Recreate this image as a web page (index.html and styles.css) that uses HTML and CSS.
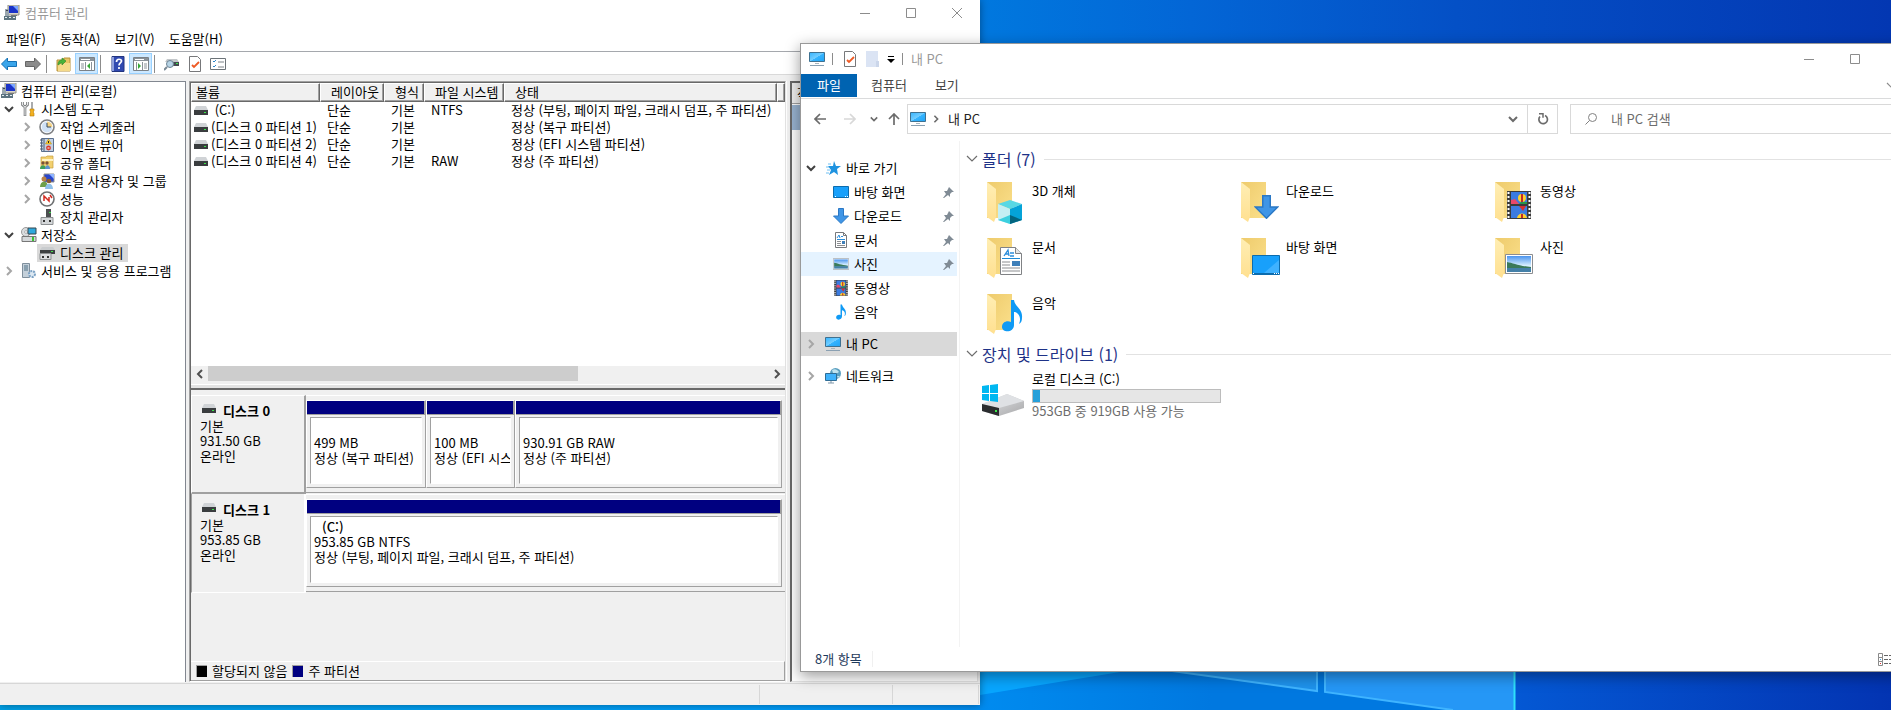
FILE: index.html
```html
<!DOCTYPE html>
<html lang="ko">

<head>
    <meta charset="UTF-8">
    <meta name="viewport" content="width=device-width, initial-scale=1.0">
    <title>컴퓨터 관리</title>
    <link rel="stylesheet" href="styles.css">
</head>

<body>
    <!-- Shared icons -->
    <svg class="sprite" aria-hidden="true">
        <defs>
            <linearGradient id="screen" x1="0" y1="0" x2="1" y2="1">
                <stop offset="0" stop-color="#35b4ff" />
                <stop offset=".5" stop-color="#74ceff" />
                <stop offset=".52" stop-color="#35b4ff" />
                <stop offset="1" stop-color="#22a4f5" />
            </linearGradient>
            <linearGradient id="folder-back" x1="0" y1="0" x2="1" y2="1">
                <stop offset="0" stop-color="#eecb6c" />
                <stop offset="1" stop-color="#fbe08c" />
            </linearGradient>
            <linearGradient id="folder-front" x1="0" y1="0" x2="0" y2="1">
                <stop offset="0" stop-color="#ffeeb4" />
                <stop offset="1" stop-color="#ffe090" />
            </linearGradient>
            <linearGradient id="sky" x1="0" y1="0" x2="0" y2="1">
                <stop offset="0" stop-color="#4a94ee" />
                <stop offset=".6" stop-color="#d8efff" />
            </linearGradient>
            <linearGradient id="metal" x1="0" y1="0" x2="1" y2="1">
                <stop offset="0" stop-color="#e6e8ea" />
                <stop offset="1" stop-color="#a8a8aa" />
            </linearGradient>
        </defs>
        <symbol id="i-mgmt" viewBox="0 0 16 16">
            <path d="M4 0h11v10H4z" fill="#d9d6c8" stroke="#8f8f88" />
            <path d="M5 1h9v7H5z" fill="#1b33c8" />
            <path d="M9 1h5v5z" fill="#7ba6ff" />
            <path d="M1 4h4v7H1z" fill="#9aa6ae" />
            <path d="M2 5h2v1H2z" fill="#445" />
            <path d="M0 11h12v4H0z" fill="#5d7480" />
            <path d="M1 12h2v1H1zm4 0h2v1H5zm4 0h2v1H9z" fill="#e8eef0" />
            <path d="M7 10h6v1H7z" fill="#777" />
        </symbol>
        <symbol id="i-tools" viewBox="0 0 16 16">
            <path d="M1.500 1v3l2.500 2 2.500-2V1M4 6v9" fill="none" stroke="#77797b" stroke-width="2.600" />
            <path d="M1.500 1v3l2.500 2 2.500-2V1M4 6v8.500" fill="none" stroke="#e9ebec" />
            <path d="M11 1v7" stroke="#8d8f92" stroke-width="1.500" />
            <path d="M9 8h4v2l-1 1 1 1v3H9v-3l1-1-1-1z" fill="#f2b01f" stroke="#b77d0c" stroke-width=".6" />
        </symbol>
        <symbol id="i-clock" viewBox="0 0 16 16">
            <circle cx="8" cy="8" r="7" fill="#fff" stroke="#7f8184" stroke-width="1.600" />
            <circle cx="8" cy="8" r="5.400" fill="#cfe1f5" />
            <path d="M8 2.600V8h5.400A5.400 5.400 0 0 0 8 2.600z" fill="#f7d484" />
            <path d="M8 4v4h4" fill="none" stroke="#34495e" />
        </symbol>
        <symbol id="i-event" viewBox="0 0 16 16">
            <path d="M2.500 1.500h12v13h-12z" fill="#c3d2e6" stroke="#5a6f8d" />
            <path d="M5 2v12M1 3h3M1 6h3M1 9h3M1 12h3" stroke="#4d5c73" />
            <path d="m9.500 2 3 5h-6z" fill="#ffcd2e" stroke="#a98008" stroke-width=".5" />
            <path d="M9.500 4v2" stroke="#222" />
            <circle cx="9.500" cy="11" r="2.400" fill="#d8382c" />
            <path d="M8.500 11h2" stroke="#fff" />
        </symbol>
        <symbol id="i-shared" viewBox="0 0 16 16">
            <path d="M2 2h5l1-1h6v12H2z" fill="#f2d06f" stroke="#c79f3d" stroke-width=".7" />
            <path d="M3 4h11v2H3z" fill="#fff3c4" />
            <circle cx="4" cy="8" r="1.700" fill="#7a5238" />
            <circle cx="8" cy="8" r="1.700" fill="#7a5238" />
            <path d="M1 14c0-5 6-5 6 0z" fill="#3d9e5b" />
            <path d="M6 14c0-5 5-5 5 0z" fill="#5c93cf" />
        </symbol>
        <symbol id="i-users" viewBox="0 0 16 16">
            <path d="M5 1h10v8H5z" fill="#2745cc" stroke="#8b8d90" />
            <path d="M10 1h5v5z" fill="#8fb4ff" />
            <circle cx="5" cy="6" r="2.500" fill="#b98145" />
            <circle cx="10" cy="8" r="2.300" fill="#8a5a30" />
            <path d="M1 14c0-7 8-7 8 0z" fill="#6fa04a" />
            <path d="M6 16c0-7 8-7 8 0z" fill="#8fc0ea" />
        </symbol>
        <symbol id="i-perf" viewBox="0 0 16 16">
            <circle cx="8" cy="8" r="7" fill="#fff" stroke="#6f7173" stroke-width="1.600" />
            <path d="M5 10V5l5 5V6M11 4l2 3" fill="none" stroke="#d22a20" stroke-width="1.500" />
        </symbol>
        <symbol id="i-device" viewBox="0 0 16 16">
            <path d="M7 0h5v8H7z" fill="#4b4e50" />
            <path d="M10 3h2v1h-2z" fill="#3be04c" />
            <path d="M2 8.500h12v7H2z" fill="#d4d7d9" stroke="#8d9092" />
            <path d="M4 11h2v2H4zm6 0h2v2h-2z" fill="#333" />
        </symbol>
        <symbol id="i-storage" viewBox="0 0 16 16">
            <circle cx="5" cy="5" r="4.500" fill="#dadddf" stroke="#999" />
            <circle cx="5" cy="5" r="1.400" fill="#fff" stroke="#888" stroke-width=".6" />
            <path d="M7 1h8v6H7z" fill="#2fa8dc" stroke="#37474f" />
            <path d="M1 9.500h14v5H1z" fill="#d5d8da" stroke="#777" />
            <path d="M11 10h2v4h-2z" fill="#3bc433" />
        </symbol>
        <symbol id="i-diskmgmt" viewBox="0 0 16 16">
            <path d="M3 2h11l2 3H1z" fill="#c9ccce" />
            <path d="M1 5h15v4H1z" fill="#3d4042" />
            <path d="M12 6h2v1h-2z" fill="#46e34a" />
            <path d="M1 8.500h11v6H1z" fill="#dcdee0" stroke="#8d9092" />
            <path d="M3 11h2v2H3zm5 0h2v2H8z" fill="#333" />
        </symbol>
        <symbol id="i-services" viewBox="0 0 16 16">
            <path d="M1.500.5h7v14h-7z" fill="#c4d0da" stroke="#7f8f9c" />
            <path d="M3 3h4M3 5h4M3 7h4" stroke="#4e7185" />
            <circle cx="11" cy="11" r="3" fill="#dce8f2" stroke="#7ba1c4" stroke-width="2" stroke-dasharray="2 1" />
        </symbol>
        <symbol id="i-drive" viewBox="0 0 14 9">
            <path d="M2 0h10l2 4H0z" fill="#d0d3d6" />
            <path d="M0 4h14v5H0z" fill="#3a3d3f" />
            <path d="M10 6h2v1h-2z" fill="#3be84a" />
        </symbol>
        <symbol id="i-pc" viewBox="0 0 16 16">
            <path d="M.5 1.500h15v9H.5z" fill="url(#screen)" stroke="#3f7190" />
            <path d="M6 12h4v1H6z" fill="#a9b4bc" />
            <path d="M1 14h14v1H1z" fill="#8aa0b2" />
        </symbol>
        <symbol id="i-check" viewBox="0 0 12 16">
            <path d="M.5.5h8l3 3v12H.5z" fill="#fff" stroke="#77787a" />
            <path d="m3 9 2 2 5-5" fill="none" stroke="#ee5a24" stroke-width="1.800" />
        </symbol>
        <symbol id="i-desktop" viewBox="0 0 16 12">
            <path d="M.5.5h15v11H.5z" fill="#18a0fb" stroke="#0b6cae" />
            <path d="M2 10.500h1m9 0h1m1 0h1" stroke="#fff" />
        </symbol>
        <symbol id="i-desktop-large" viewBox="0 0 28 20">
            <path d="M.5.5h27v19H.5z" fill="#18a0fb" stroke="#0b6cae" />
            <path d="M27 5v13H12z" fill="#3fb2ff" />
            <path d="M1 18.500h26" stroke="#0b6cae" />
            <path d="M1 18.500h1m20 0h1m1 0h1m1 0h1" stroke="#fff" />
        </symbol>
        <symbol id="i-down" viewBox="0 0 16 16">
            <path d="M5.500.5h5V8h5L8 15.500.5 8h5z" fill="#3f95e6" stroke="#2b78c5" />
        </symbol>
        <symbol id="i-doc" viewBox="0 0 22 28">
            <path d="M.5.5h15l6 6v21H.5z" fill="#fff" stroke="#808285" />
            <path d="M15.500.5v6h6" fill="#e4e5e6" stroke="#808285" />
            <path d="m4 9 4-6 1 6M5 7h4M10 6h4M10 9h4" fill="none" stroke="#2b8ddb" stroke-width="1.300" />
            <path d="M2 11.500h18" stroke="#1c8ad6" />
            <path d="M2 15h8M2 18h8M2 21h18M2 24h18" stroke="#8b8d90" />
            <path d="M12 14h8v5h-8z" fill="#3e7fb9" />
        </symbol>
        <symbol id="i-doc-small" viewBox="0 0 16 16">
            <path d="M2.500.5h8l3 3v12h-11z" fill="#fff" stroke="#77797c" />
            <path d="M10.500.5v3h3" fill="none" stroke="#77797c" />
            <path d="m4 6 2-3 1 3M8 4.500h2M4 7.500h8" fill="none" stroke="#2b8ddb" />
            <path d="M4 9.500h4M4 11.500h4M4 13.500h8" stroke="#8b8d90" />
            <path d="M9 9h3v3H9z" fill="#3e7fb9" />
        </symbol>
        <symbol id="i-photo" viewBox="0 0 28 20">
            <path d="M.5.5h27v19H.5z" fill="#fff" stroke="#8b8d90" />
            <path d="M2 2h24v16H2z" fill="url(#sky)" />
            <path d="M2 8c6 1 12 4 24 5v2H2z" fill="#3b7a5a" />
            <path d="M2 14h24v4H2z" fill="#4480a8" />
        </symbol>
        <symbol id="i-video" viewBox="0 0 24 28">
            <path d="M0 0h24v28H0z" fill="#3b3b3b" />
            <path d="M1.500 1v27M22.500 1v27" stroke="#fff" stroke-width="2" stroke-dasharray="2 2" />
            <path d="M4 1h16v12H4zM4 15h16v12H4z" fill="#3b7be0" />
            <path d="M4 9l4-1 4 5H4z" fill="#e8486a" />
            <path d="M12 13h8v-2h-6z" fill="#26964a" />
            <circle cx="15" cy="7" r="4" fill="#ffd02a" />
            <path d="M14 3h2v8h-2z" fill="#c22a2a" />
            <path d="M12 15h7l-3 5z" fill="#d63030" />
            <path d="M10 27c1-6 9-6 10 0z" fill="#ffd02a" />
            <path d="M14 23h2v4h-2z" fill="#c22a2a" />
        </symbol>
        <symbol id="i-music" viewBox="0 0 22 33">
            <path d="M10 1h3c1 7 9 9 8 18 0 3-1 5-3 6 3-7-1-12-5-12v13c0 8-12 8-12 2 0-5 5-7 9-5z" fill="#0f9af5" />
        </symbol>
        <symbol id="i-cube" viewBox="0 0 26 24">
            <path d="m13 0 12 4-12 5L1 4z" fill="#59d8e4" />
            <path d="m1 4 12 5v15L1 20z" fill="#c4eff3" />
            <path d="m25 4-12 5v15l12-4z" fill="#05a3d8" />
            <path d="m1 20 12-5v9z" fill="#3cd0df" />
            <path d="m25 20-12-5v9z" fill="#04657f" />
        </symbol>
        <symbol id="i-star" viewBox="0 0 16 16">
            <path d="m9 1 2 5 5 0-4 3 1 6-4-3-5 3 2-5-3-4h5z" fill="#1f93e0" />
            <path d="M3 4h3M1 7h3M2 10h3M1 13h3" stroke="#6ec0f2" />
        </symbol>
        <symbol id="i-network" viewBox="0 0 16 16">
            <circle cx="10.500" cy="5.500" r="5.500" fill="#5a9fc0" />
            <path d="M7 2c3-2 6 0 7 2l-3 2-3-1zM12 8h3l-2 2z" fill="#bfe3ee" />
            <path d="M.5 5.500h11v7H.5z" fill="#3fb2fb" stroke="#2f6d96" />
            <path d="M3 15h6M6 13v2" stroke="#7e97aa" />
        </symbol>
        <symbol id="i-pin" viewBox="0 0 11 11">
            <path d="M6 0l5 5-2 0-2 2 0 3-2-2-4 3-1 0 3-4-2-3 3 0 1-2z" fill="#808b95" />
        </symbol>
        <symbol id="i-folder" viewBox="0 0 48 48">
            <path d="M9 5h25v36H9z" fill="url(#folder-back)" />
            <path d="m9 5 9 7v28l-2 5-7-5z" fill="url(#folder-front)" />
        </symbol>
        <symbol id="i-chev" viewBox="0 0 10 10">
            <path d="m3 1 4 4-4 4" fill="none" stroke="currentColor" stroke-width="2" />
        </symbol>
        <symbol id="i-chev-down" viewBox="0 0 10 10">
            <path d="m1 3 4 4 4-4" fill="none" stroke="currentColor" stroke-width="2" />
        </symbol>
        <symbol id="i-chev-thin" viewBox="0 0 12 12">
            <path d="m1 3 5 5 5-5" fill="none" stroke="currentColor" stroke-width="1.200" />
        </symbol>
        <symbol id="i-min" viewBox="0 0 10 10">
            <path d="M0 5.500h10" stroke="currentColor" />
        </symbol>
        <symbol id="i-max" viewBox="0 0 10 10">
            <path d="M.5.5h9v9h-9z" fill="none" stroke="currentColor" />
        </symbol>
        <symbol id="i-close" viewBox="0 0 10 10">
            <path d="m0 0 10 10M10 0 0 10" stroke="currentColor" />
        </symbol>
    </svg>

    <svg class="wallpaper" viewBox="0 0 1891 710" preserveAspectRatio="none" aria-hidden="true">
        <defs>
            <linearGradient id="wall-top" x1="0" x2="1">
                <stop offset=".5" stop-color="#007be0" />
                <stop offset=".63" stop-color="#0366d6" />
                <stop offset=".77" stop-color="#0450c6" />
                <stop offset="1" stop-color="#0337b2" />
            </linearGradient>
            <linearGradient id="wall-low" x1="0" x2="1">
                <stop offset="0" stop-color="#00a0e6" />
                <stop offset=".5" stop-color="#009df8" />
                <stop offset=".6" stop-color="#0091f4" />
                <stop offset=".8" stop-color="#0078e0" />
            </linearGradient>
            <linearGradient id="wall-right" x1="0" x2="1">
                <stop offset="0" stop-color="#0458d4" />
                <stop offset="1" stop-color="#0334b2" />
            </linearGradient>
        </defs>
        <path d="M0 0h1891v710H0z" fill="url(#wall-top)" />
        <path d="M0 500h1515v210H0z" fill="url(#wall-low)" />
        <path d="M1515 500h376v210h-376z" fill="url(#wall-right)" />
        <path d="M980 695l140-23H980z" fill="#08a6ff" />
        <path d="M1170 671h147v20z" fill="#1e92ec" />
        <path d="M1325 671h190v39h-62l-128-18z" fill="#2597f6" />
        <path d="M1172 671l145 20v-20M1325 671v21l128 18" fill="none" stroke="#3fb4ff" stroke-width="2" />
        <path d="M1514.500 500v210" stroke="#2fe0fb" stroke-width="2" />
    </svg>

    <!-- Computer Management -->
    <section class="window mgmt">
        <header class="mgmt-title">
            <svg class="i16"><use href="#i-mgmt" /></svg>
            <h1>컴퓨터 관리</h1>
            <div class="controls">
                <button type="button" aria-label="최소화"><svg class="i10"><use href="#i-min" /></svg></button>
                <button type="button" aria-label="최대화"><svg class="i10"><use href="#i-max" /></svg></button>
                <button type="button" aria-label="닫기"><svg class="i10"><use href="#i-close" /></svg></button>
            </div>
        </header>
        <nav class="menubar">
            <button type="button">파일(F)</button>
            <button type="button">동작(A)</button>
            <button type="button">보기(V)</button>
            <button type="button">도움말(H)</button>
        </nav>
        <div class="toolbar">
            <button type="button" aria-label="뒤로"><svg class="i16" viewBox="0 0 16 16"><path d="m.5 8 6-6v3.500h9v5h-9V14z" fill="#3aa5ea" stroke="#1571b5" /></svg></button>
            <button type="button" aria-label="앞으로"><svg class="i16" viewBox="0 0 16 16"><path d="m15.500 8-6-6v3.500h-9v5h9V14z" fill="#8c8c8c" stroke="#666" /></svg></button>
            <span class="sep"></span>
            <button type="button" aria-label="위로"><svg class="i16" viewBox="0 0 16 16"><path d="M1 4h6l1-2h6v13H1z" fill="#e8c565" stroke="#b8923a" /><path d="M2 7h12v8H2z" fill="#f5da8a" /><path d="M2 9c0-4 2-5 4-5V2l4 3-4 4V7C4 7 4 8 2 9z" fill="#48b33a" stroke="#2e8526" stroke-width=".6" /></svg></button>
            <button type="button" class="on" aria-label="콘솔 트리"><svg class="i16" viewBox="0 0 16 16"><path d="M.5 1.500h15v13H.5z" fill="#fff" stroke="#7b8187" /><path d="M1 2h14v3H1z" fill="#8a9299" /><path d="M2 3.500h9" stroke="#fff" /><path d="M6.500 6v8M12.500 6v8M2 8h3M2 10h3M2 12h3" stroke="#8a9299" /><path d="M11 7v6l-3-3z" fill="#37a837" /></svg></button>
            <span class="sep"></span>
            <button type="button" aria-label="도움말"><svg class="i16" viewBox="0 0 16 16"><path d="M2 .5h12v15H2z" fill="#3049b0" stroke="#22357f" /><path d="M2 1h2v14H2z" fill="#8fa0dd" /><path d="M6.500 6c0-4 5-3 5-1 0 2-2.500 2-2.500 4.500M9 11v2" fill="none" stroke="#fff" stroke-width="1.700" /></svg></button>
            <button type="button" class="on" aria-label="작업 창"><svg class="i16" viewBox="0 0 16 16"><path d="M.5 1.500h15v13H.5z" fill="#fff" stroke="#7b8187" /><path d="M1 2h14v3H1z" fill="#8a9299" /><path d="M2 3.500h9" stroke="#fff" /><path d="M3.500 6v8M9.500 6v8M11 8h3M11 10h3M11 12h3" stroke="#8a9299" /><path d="M5 7v6l3-3z" fill="#37a837" /></svg></button>
            <span class="sep"></span>
            <button type="button" aria-label="다시 검색"><svg class="i16" viewBox="0 0 16 16"><path d="M3 3h10l2 3H1z" fill="#c3c7ca" /><path d="M3 6h12v4H3z" fill="#444b50" /><path d="M12 7h2v1h-2z" fill="#3be84a" /><circle cx="6" cy="8" r="3.500" fill="#b7d4e6" stroke="#6d8495" /><path d="m3 11-3 3" stroke="#7a8a96" stroke-width="2" /></svg></button>
            <button type="button" aria-label="속성"><svg class="check"><use href="#i-check" /></svg></button>
            <button type="button" aria-label="목록"><svg class="i16" viewBox="0 0 16 16"><path d="M.5 2.500h15v11H.5z" fill="#fff" stroke="#6c7378" /><path d="m3 5 1 1 2-2M3 10l1 1 2-2" fill="none" stroke="#2e86c9" /><path d="M8 6h6M8 11h6" stroke="#7c8388" /></svg></button>
        </div>

        <div class="mgmt-body">
            <ul class="tree">
                <li><svg class="i16"><use href="#i-mgmt" /></svg><span>컴퓨터 관리(로컬)</span></li>
                <li class="l1 open"><svg class="i10"><use href="#i-chev-down" /></svg><svg class="i16"><use href="#i-tools" /></svg><span>시스템 도구</span></li>
                <li class="l2"><svg class="i10"><use href="#i-chev" /></svg><svg class="i16"><use href="#i-clock" /></svg><span>작업 스케줄러</span></li>
                <li class="l2"><svg class="i10"><use href="#i-chev" /></svg><svg class="i16"><use href="#i-event" /></svg><span>이벤트 뷰어</span></li>
                <li class="l2"><svg class="i10"><use href="#i-chev" /></svg><svg class="i16"><use href="#i-shared" /></svg><span>공유 폴더</span></li>
                <li class="l2"><svg class="i10"><use href="#i-chev" /></svg><svg class="i16"><use href="#i-users" /></svg><span>로컬 사용자 및 그룹</span></li>
                <li class="l2"><svg class="i10"><use href="#i-chev" /></svg><svg class="i16"><use href="#i-perf" /></svg><span>성능</span></li>
                <li class="l2 leaf"><svg class="i16"><use href="#i-device" /></svg><span>장치 관리자</span></li>
                <li class="l1 open"><svg class="i10"><use href="#i-chev-down" /></svg><svg class="i16"><use href="#i-storage" /></svg><span>저장소</span></li>
                <li class="l2 leaf selected"><svg class="i16"><use href="#i-diskmgmt" /></svg><span>디스크 관리</span></li>
                <li class="l1"><svg class="i10"><use href="#i-chev" /></svg><svg class="i16"><use href="#i-services" /></svg><span>서비스 및 응용 프로그램</span></li>
            </ul>

            <div class="disk-pane">
                <div class="volume-list">
                    <table>
                        <thead>
                            <tr>
                                <th class="c-volume">볼륨</th>
                                <th class="c-layout">레이아웃</th>
                                <th class="c-type">형식</th>
                                <th class="c-fs">파일 시스템</th>
                                <th class="c-status">상태</th>
                                <th></th>
                            </tr>
                        </thead>
                        <tbody>
                            <tr>
                                <td><svg class="drive"><use href="#i-drive" /></svg>&nbsp;(C:)</td>
                                <td>단순</td>
                                <td>기본</td>
                                <td>NTFS</td>
                                <td>정상 (부팅, 페이지 파일, 크래시 덤프, 주 파티션)</td>
                                <td></td>
                            </tr>
                            <tr>
                                <td><svg class="drive"><use href="#i-drive" /></svg>(디스크 0 파티션 1)</td>
                                <td>단순</td>
                                <td>기본</td>
                                <td></td>
                                <td>정상 (복구 파티션)</td>
                                <td></td>
                            </tr>
                            <tr>
                                <td><svg class="drive"><use href="#i-drive" /></svg>(디스크 0 파티션 2)</td>
                                <td>단순</td>
                                <td>기본</td>
                                <td></td>
                                <td>정상 (EFI 시스템 파티션)</td>
                                <td></td>
                            </tr>
                            <tr>
                                <td><svg class="drive"><use href="#i-drive" /></svg>(디스크 0 파티션 4)</td>
                                <td>단순</td>
                                <td>기본</td>
                                <td>RAW</td>
                                <td>정상 (주 파티션)</td>
                                <td></td>
                            </tr>
                        </tbody>
                    </table>
                </div>
                <div class="scrollbar">
                    <button type="button" aria-label="왼쪽으로"><svg class="i10 flip"><use href="#i-chev" /></svg></button>
                    <div class="track"><div class="thumb"></div></div>
                    <button type="button" aria-label="오른쪽으로"><svg class="i10"><use href="#i-chev" /></svg></button>
                </div>
                <div class="splitter"></div>

                <div class="disks">
                    <div class="disk">
                        <div class="disk-label">
                            <h2><svg class="drive"><use href="#i-drive" /></svg>디스크 0</h2>
                            <p>기본</p>
                            <p>931.50 GB</p>
                            <p>온라인</p>
                        </div>
                        <div class="parts">
                            <div class="part recovery">
                                <div class="bar"></div>
                                <div class="info"><p></p><p>499 MB</p><p>정상 (복구 파티션)</p></div>
                            </div>
                            <div class="part efi">
                                <div class="bar"></div>
                                <div class="info"><p></p><p>100 MB</p><p>정상 (EFI 시스</p></div>
                            </div>
                            <div class="part">
                                <div class="bar"></div>
                                <div class="info"><p></p><p>930.91 GB RAW</p><p>정상 (주 파티션)</p></div>
                            </div>
                        </div>
                    </div>
                    <div class="disk current">
                        <div class="disk-label">
                            <h2><svg class="drive"><use href="#i-drive" /></svg>디스크 1</h2>
                            <p>기본</p>
                            <p>953.85 GB</p>
                            <p>온라인</p>
                        </div>
                        <div class="parts">
                            <div class="part">
                                <div class="bar"></div>
                                <div class="info"><p class="name">(C:)</p><p>953.85 GB NTFS</p><p>정상 (부팅, 페이지 파일, 크래시 덤프, 주 파티션)</p></div>
                            </div>
                        </div>
                    </div>
                </div>
                <div class="legend">
                    <span class="swatch unallocated"></span><span>할당되지 않음</span>
                    <span class="swatch primary"></span><span>주 파티션</span>
                </div>
            </div>

            <aside class="actions">
                <h2>작업</h2>
                <div class="action-group">디스크 관리</div>
            </aside>
        </div>
        <footer class="mgmt-status"><span></span><span></span><span></span></footer>
    </section>

    <!-- File Explorer -->
    <section class="window explorer">
        <header class="exp-title">
            <svg class="i16"><use href="#i-pc" /></svg>
            <span class="sep"></span>
            <button type="button" aria-label="속성"><svg class="check"><use href="#i-check" /></svg></button>
            <button type="button" aria-label="새 폴더"><svg class="ghost" viewBox="0 0 13 16"><path d="M0 0h12v16H0z" fill="#dbe4f4" /><path d="M10 10h3v6h-3z" fill="#cbd6ea" /></svg></button>
            <button type="button" aria-label="사용자 지정"><svg class="caret" viewBox="0 0 8 8"><path d="M1 1.500h6" stroke="#000" /><path d="M0 4h8L4 8z" /></svg></button>
            <span class="sep"></span>
            <h1>내 PC</h1>
            <div class="controls">
                <button type="button" aria-label="최소화"><svg class="i10"><use href="#i-min" /></svg></button>
                <button type="button" aria-label="최대화"><svg class="i10"><use href="#i-max" /></svg></button>
                <button type="button" aria-label="닫기"><svg class="i10"><use href="#i-close" /></svg></button>
            </div>
        </header>
        <nav class="tabs">
            <button type="button" class="file">파일</button>
            <button type="button">컴퓨터</button>
            <button type="button">보기</button>
            <button type="button" class="expand" aria-label="리본 확장"><svg class="i12"><use href="#i-chev-thin" /></svg></button>
        </nav>
        <div class="navbar">
            <button type="button" class="back" aria-label="뒤로"><svg class="i12" viewBox="0 0 12 12"><path d="M12 6H1M6 1 1 6l5 5" fill="none" stroke="#6b6b6b" stroke-width="1.700" /></svg></button>
            <button type="button" class="forward" aria-label="앞으로"><svg class="i12" viewBox="0 0 12 12"><path d="M0 6h11M6 1l5 5-5 5" fill="none" stroke="#d8d8d8" stroke-width="1.700" /></svg></button>
            <button type="button" class="recent" aria-label="최근 위치"><svg class="i8"><use href="#i-chev-down" /></svg></button>
            <button type="button" class="up" aria-label="위로"><svg class="i12" viewBox="0 0 12 12"><path d="M6 12V1M1 6l5-5 5 5" fill="none" stroke="#6b6b6b" stroke-width="1.700" /></svg></button>
            <div class="address">
                <svg class="i16"><use href="#i-pc" /></svg>
                <svg class="i8"><use href="#i-chev" /></svg>
                <a href="#">내 PC</a>
                <button type="button" class="history" aria-label="이전 위치"><svg class="i10"><use href="#i-chev-down" /></svg></button>
                <button type="button" class="refresh" aria-label="새로 고침"><svg class="i12" viewBox="0 0 12 12"><path d="M8 2.500a4.300 4.300 0 1 1-5 1" fill="none" stroke="#6b6b6b" stroke-width="1.700" /><path d="M2 .8h4v4" fill="none" stroke="#6b6b6b" stroke-width="1.500" /></svg></button>
            </div>
            <label class="search">
                <svg class="i12" viewBox="0 0 12 12"><circle cx="7.500" cy="4.500" r="4" fill="none" stroke="#808080" /><path d="m4.500 7.500-4 4" stroke="#808080" /></svg>
                <input type="text" placeholder="내 PC 검색" aria-label="내 PC 검색">
            </label>
        </div>

        <div class="exp-body">
            <nav class="side">
                <ul>
                    <li class="open"><svg class="i10"><use href="#i-chev-down" /></svg><svg class="i16"><use href="#i-star" /></svg><a href="#">바로 가기</a></li>
                    <li class="sub"><svg class="i16"><use href="#i-desktop" /></svg><a href="#">바탕 화면</a><svg class="pin"><use href="#i-pin" /></svg></li>
                    <li class="sub"><svg class="i16"><use href="#i-down" /></svg><a href="#">다운로드</a><svg class="pin"><use href="#i-pin" /></svg></li>
                    <li class="sub"><svg class="i16"><use href="#i-doc-small" /></svg><a href="#">문서</a><svg class="pin"><use href="#i-pin" /></svg></li>
                    <li class="sub hover"><svg class="i16"><use href="#i-photo" /></svg><a href="#">사진</a><svg class="pin"><use href="#i-pin" /></svg></li>
                    <li class="sub"><svg class="i16"><use href="#i-video" /></svg><a href="#">동영상</a></li>
                    <li class="sub"><svg class="i16"><use href="#i-music" /></svg><a href="#">음악</a></li>
                </ul>
                <ul>
                    <li class="selected"><svg class="i10"><use href="#i-chev" /></svg><svg class="i16"><use href="#i-pc" /></svg><a href="#">내 PC</a></li>
                </ul>
                <ul>
                    <li><svg class="i10"><use href="#i-chev" /></svg><svg class="i16"><use href="#i-network" /></svg><a href="#">네트워크</a></li>
                </ul>
            </nav>

            <main class="content">
                <h2><svg class="i12"><use href="#i-chev-thin" /></svg>폴더 (7)</h2>
                <div class="grid">
                    <a class="tile" href="#"><svg viewBox="0 0 48 48"><use href="#i-folder" /><use href="#i-cube" x="19" y="23" width="26" height="24" /></svg>3D 개체</a>
                    <a class="tile" href="#"><svg viewBox="0 0 48 48"><use href="#i-folder" /><use href="#i-down" x="22" y="18" width="25" height="24" /></svg>다운로드</a>
                    <a class="tile" href="#"><svg viewBox="0 0 48 48"><use href="#i-folder" /><use href="#i-video" x="21" y="14" width="24" height="28" /></svg>동영상</a>
                    <a class="tile" href="#"><svg viewBox="0 0 48 48"><use href="#i-folder" /><use href="#i-doc" x="22" y="14" width="22" height="28" /></svg>문서</a>
                    <a class="tile" href="#"><svg viewBox="0 0 48 48"><use href="#i-folder" /><use href="#i-desktop-large" x="20" y="22" width="28" height="20" /></svg>바탕 화면</a>
                    <a class="tile" href="#"><svg viewBox="0 0 48 48"><use href="#i-folder" /><use href="#i-photo" x="19" y="21" width="28" height="20" /></svg>사진</a>
                    <a class="tile" href="#"><svg viewBox="0 0 48 48"><use href="#i-folder" /><use href="#i-music" x="23" y="10" width="22" height="33" /></svg>음악</a>
                </div>
                <h2><svg class="i12"><use href="#i-chev-thin" /></svg>장치 및 드라이브 (1)</h2>
                <div class="volume">
                    <svg viewBox="0 0 48 48">
                        <path d="m4 31 25-10 17 7v7L21 43 4 38z" fill="url(#metal)" />
                        <path d="m4 31 25-10 17 7-25 7z" fill="#dfe1e4" />
                        <path d="m4 31 17 4v8L4 38z" fill="#2b2d2f" />
                        <path d="M17 37h2v2h-2z" fill="#39e84a" />
                        <path d="m4 13 7-1v8H4zm8-1 8-1v9h-8zM4 21h7v7l-7-1zm8 0h8v8l-8-1z" fill="#00b7f1" />
                    </svg>
                    <div>
                        <a href="#">로컬 디스크 (C:)</a>
                        <progress value="34" max="953" aria-label="로컬 디스크 (C:)"></progress>
                        <p>953GB 중 919GB 사용 가능</p>
                    </div>
                </div>
            </main>
        </div>
        <footer class="exp-status">
            <span>8개 항목</span>
            <button type="button" aria-label="자세히"><svg class="details" viewBox="0 0 20 13"><path d="M.5.5h4v4h-4zM.5 4.500h4v4h-4zM.5 8.500h4v4h-4z" fill="#fff" stroke="#8a8a8a" /><path d="M2 6.500h1" stroke="#3a9be0" /><path d="M2 10.500h1" stroke="#d33" /><path d="M6 2.500h4m1 0h4M6 6.500h4m1 0h4M6 10.500h4m1 0h4" stroke="#666" /></svg></button>
        </footer>
    </section>
</body>

</html>
```

FILE: styles.css
```css
:root {
    --face: #f0f0f0;
    --shadow: #a0a0a0;
    --dark: #696969;
    --navy: #000080;
}

* {
    box-sizing: border-box;
}

body {
    margin: 0;
    height: 100vh;
    overflow: hidden;
    position: relative;
    font: 13px/16px "Noto Sans CJK KR", "Open Sans", sans-serif;
    color: #000;
}

h1,
h2,
p,
ul {
    margin: 0;
    padding: 0;
    font-size: 13px;
    font-weight: normal;
}

ul {
    list-style: none;
}

a {
    color: inherit;
    text-decoration: none;
}

button {
    display: flex;
    align-items: center;
    justify-content: center;
    margin: 0;
    padding: 0;
    border: 0;
    background: none;
    font: inherit;
    color: inherit;
}

svg {
    display: block;
    flex: none;
}

.sprite {
    position: absolute;
    width: 0;
    height: 0;
}

.wallpaper {
    position: absolute;
    inset: 0;
    width: 100%;
    height: 100%;
}

.i8 {
    width: 8px;
    height: 8px;
}

.i10 {
    width: 10px;
    height: 10px;
}

.i12 {
    width: 12px;
    height: 12px;
}

.i16 {
    width: 16px;
    height: 16px;
}

.check {
    width: 12px;
    height: 16px;
}

.drive {
    width: 14px;
    height: 9px;
}

.flip {
    transform: scaleX(-1);
}

/* Windows on the desktop */
.window {
    position: absolute;
    display: flex;
    flex-direction: column;
    background: #fff;
}

.mgmt {
    inset: 0 911px 5px 0;
    box-shadow: 0 0 8px rgba(0, 0, 0, 0.4);
}

.explorer {
    inset: 43px -34px 38px 800px;
    border: 1px solid #999;
    box-shadow: 0 4px 14px rgba(0, 0, 0, 0.4);
}

.controls {
    display: flex;
    align-self: stretch;
    margin-left: auto;
    color: #8c8c8c;
}

.controls button {
    width: 46px;
}

.sep {
    width: 1px;
    background: #8c8c8c;
}

/* Computer Management */
.mgmt-title {
    display: flex;
    align-items: center;
    gap: 5px;
    height: 27px;
    padding: 0 0 2px 4px;
    color: #999;
}

.menubar {
    display: flex;
    gap: 14px;
    height: 25px;
    padding: 0 6px 1px;
    border-bottom: 1px solid #a5a8ad;
}

.toolbar {
    display: flex;
    align-items: center;
    height: 23px;
    padding-top: 1px;
    border-bottom: 1px solid #d9d9d9;
}

.toolbar button {
    width: 23px;
    height: 21px;
}

.toolbar button:first-child {
    width: 18px;
    margin-right: 3px;
}

.toolbar .on {
    background: #cce8ff;
    border: 1px solid #99d1ff;
}

.toolbar .sep {
    height: 18px;
    margin: 0 5px 0 2px;
}

.mgmt-body {
    flex: 1;
    display: flex;
    gap: 3px;
    min-height: 0;
    padding: 6px 2px 1px 0;
    background: var(--face);
}

.tree {
    width: 186px;
    border: 1px solid #828790;
    border-width: 1px 1px 0 0;
    background: #fff;
}

.tree li {
    display: flex;
    align-items: center;
    gap: 4px;
    height: 18px;
    padding-left: 1px;
    white-space: nowrap;
}

.tree .l1 {
    padding-left: 4px;
}

.tree .l1 .i10 + .i16 {
    margin-left: 3px;
}

.tree .l2 {
    padding-left: 22px;
    gap: 5px;
}

.tree .l2 .i10 + .i16 {
    margin-left: 2px;
}

.tree .leaf {
    margin-left: 37px;
    padding-left: 2px;
}

.tree .selected {
    width: 91px;
    background: #d9d9d9;
}

.tree .i10 {
    color: #a6a6a6;
}

.tree .open .i10 {
    color: #404040;
}

.disk-pane {
    flex: 1;
    min-width: 0;
    display: flex;
    flex-direction: column;
    margin-right: 1px;
    border: 1px solid var(--shadow);
    border-right-color: #e3e3e3;
    border-bottom-color: #fff;
    box-shadow: inset 1px 1px 0 var(--dark), 1px 0 0 #fff;
    padding: 1px 0 0 1px;
}

.volume-list {
    height: 283px;
    overflow: hidden;
    background: #fff;
}

.volume-list table {
    width: 100%;
    table-layout: fixed;
    border-collapse: separate;
    border-spacing: 0;
}

.volume-list th {
    height: 19px;
    padding: 0 0 1px 10px;
    border: 1px solid #fff;
    border-right-color: var(--dark);
    border-bottom-color: var(--dark);
    box-shadow: inset -1px -1px 0 var(--shadow);
    background: var(--face);
    font-weight: normal;
    text-align: left;
    white-space: nowrap;
}

.volume-list .c-volume {
    width: 129px;
    padding-left: 4px;
}

.c-layout {
    width: 64px;
}

.c-type {
    width: 40px;
}

.c-fs {
    width: 80px;
}

.c-status {
    width: 273px;
}

.volume-list td {
    height: 17px;
    padding: 0 0 2px 7px;
    line-height: 15px;
    white-space: nowrap;
}

.volume-list td:first-child {
    padding-left: 3px;
}

.volume-list .drive {
    display: inline-block;
    margin-right: 3px;
}

.scrollbar {
    display: flex;
    height: 18px;
    padding-bottom: 2px;
    background: var(--face);
    color: #505050;
}

.scrollbar button {
    width: 17px;
}

.track {
    flex: 1;
}

.thumb {
    width: 66%;
    height: 15px;
    background: #cdcdcd;
}

.splitter {
    height: 6px;
    border-top: 1px solid #fff;
    border-bottom: 2px solid var(--dark);
    background: #e3e3e3;
}

.disks {
    flex: 1;
    padding-top: 5px;
    background: var(--face);
}

.disk {
    display: flex;
    height: 99px;
}

.disk-label {
    width: 115px;
    padding: 7px 0 0 8px;
    border: 1px solid #fff;
    border-right: 2px solid var(--shadow);
    border-bottom: 2px solid var(--shadow);
    line-height: 15px;
}

.current .disk-label {
    border-color: var(--shadow) #fff #fff var(--shadow);
    border-top-width: 0;
    border-bottom-width: 1px;
    padding-top: 8px;
}

.disk-label h2 {
    display: flex;
    align-items: center;
    gap: 7px;
    padding-left: 2px;
    font-weight: bold;
}

.disk-label h2 .drive {
    margin-bottom: 4px;
}

.parts {
    flex: 1;
    display: flex;
    min-width: 0;
    margin-bottom: 1px;
    padding: 4px 3px 4px 0;
    border-top: 1px solid #fff;
    border-bottom: 1px solid var(--shadow);
}

.part {
    flex: 1;
    min-width: 0;
    display: flex;
    flex-direction: column;
    border: 1px solid #fff;
    border-right-color: var(--shadow);
    border-bottom-color: var(--shadow);
}

.part.recovery {
    flex: none;
    width: 120px;
}

.part.efi {
    flex: none;
    width: 89px;
}

.bar {
    height: 14px;
    border-bottom: 1px solid var(--shadow);
    border-right: 1px solid var(--shadow);
    background: var(--navy);
}

.info {
    flex: 1;
    margin: 2px 3px 3px;
    padding: 2px 3px;
    overflow: hidden;
    border: 1px solid #fff;
    border-top-color: var(--shadow);
    border-left-color: var(--shadow);
    background: #fff;
    line-height: 15px;
    white-space: nowrap;
}

.info p {
    min-height: 15px;
}

.info .name {
    padding-left: 8px;
    font-weight: 500;
}

.legend {
    display: flex;
    align-items: center;
    gap: 5px;
    height: 20px;
    padding-left: 5px;
    border: 1px solid var(--shadow);
    border-width: 1px 1px 1px 0;
    border-top-color: #fff;
    background: var(--face);
}

.swatch {
    width: 11px;
    height: 12px;
    border: 1px solid var(--shadow);
    border-width: 1px 0 0 1px;
}

.unallocated {
    background: #000;
}

.primary {
    background: var(--navy);
}

.actions {
    width: 188px;
    border: 1px solid var(--dark);
    border-width: 2px 1px 1px 2px;
    border-right-color: #e3e3e3;
    border-bottom-color: #e3e3e3;
    background: #fff;
}

.actions h2 {
    height: 21px;
    padding: 2px 5px;
    border-bottom: 1px solid var(--shadow);
    background: var(--face);
}

.action-group {
    height: 25px;
    margin-top: 1px;
    padding: 5px 8px;
    background: #99b4d1;
    font-weight: bold;
}

.mgmt-status {
    display: flex;
    justify-content: flex-end;
    height: 22px;
    padding: 1px 1px 1px 0;
    border-top: 1px solid #d7d7d7;
    background: var(--face);
}

.mgmt-status span {
    border-right: 1px solid #d7d7d7;
}

.mgmt-status span:nth-child(2) {
    width: 133px;
}

.mgmt-status span:nth-child(3) {
    width: 86px;
}

/* File Explorer */
.exp-title {
    display: flex;
    align-items: center;
    height: 30px;
    padding-left: 8px;
    color: #999;
}

.exp-title .sep {
    height: 12px;
    margin: 0 11px 0 7px;
}

.exp-title .ghost {
    width: 13px;
    height: 16px;
    margin: 0 8px 0 10px;
}

.exp-title .caret {
    width: 8px;
    height: 8px;
}

.exp-title h1 {
    margin-left: -3px;
}

.tabs {
    display: flex;
    height: 25px;
    padding-bottom: 1px;
    border-bottom: 1px solid #dadbdc;
    color: #444;
}

.tabs button {
    padding: 0 14px 1px;
}

.tabs .file {
    width: 56px;
    background: #0063b1;
    color: #fff;
}

.tabs .expand {
    margin-left: auto;
    padding: 0 26px 0 0;
    color: #8c8c8c;
}

.navbar {
    display: flex;
    align-items: center;
    height: 40px;
    padding: 0 10px 0 13px;
    color: #6b6b6b;
}

.back {
    margin-right: 18px;
}

.forward {
    margin-right: 14px;
}

.recent {
    margin-right: 10px;
}

.up {
    margin-right: 7px;
}

.address,
.search {
    display: flex;
    align-items: center;
    height: 30px;
    border: 1px solid #d9d9d9;
}

.address {
    flex: 1;
    margin-right: 12px;
    padding-left: 2px;
}

.address .i8 {
    margin: 0 8px 0 6px;
}

.address a {
    flex: 1;
    color: #222;
}

.address .history {
    width: 29px;
}

.address .refresh {
    width: 30px;
    height: 28px;
    border-left: 1px solid #d9d9d9;
}

.search {
    width: 344px;
    padding-left: 14px;
    gap: 14px;
}

.search input {
    flex: 1;
    min-width: 0;
    padding: 0;
    border: 0;
    outline: 0;
    font: inherit;
}

.search input::placeholder {
    color: #6d6d6d;
}

.exp-body {
    flex: 1;
    display: flex;
    min-height: 0;
    padding-top: 2px;
}

.side {
    width: 159px;
    padding: 15px 2px 0 0;
    border-right: 1px solid #f3f3f3;
}

.side ul {
    margin-bottom: 8px;
}

.side li {
    display: flex;
    align-items: center;
    gap: 5px;
    height: 24px;
    padding: 0 3px 0 5px;
}

.side .i10 {
    margin-right: 4px;
    color: #a6a6a6;
}

.side .open .i10 {
    color: #404040;
}

.side .sub {
    padding-left: 32px;
}

.side .hover {
    background: #e5f3ff;
}

.side .selected {
    background: #d9d9d9;
}

.pin {
    width: 11px;
    height: 11px;
    margin-left: auto;
}

.content {
    flex: 1;
    padding: 9px 0 0 6px;
}

.content h2 {
    display: flex;
    align-items: center;
    gap: 4px;
    height: 18px;
    font-size: 16px;
    line-height: 18px;
    color: #1e3287;
}

.content h2 svg {
    color: #6d6d6d;
}

.content h2::after {
    content: "";
    flex: 1;
    height: 1px;
    margin-left: 4px;
    background: #e2e2e2;
}

.grid {
    display: grid;
    grid-template-columns: repeat(auto-fill, 254px);
    grid-auto-rows: 56px;
    padding: 9px 0 0 12px;
    margin-right: 60px;
}

.tile {
    display: flex;
    gap: 6px;
    line-height: 28px;
}

.tile svg,
.volume svg {
    width: 48px;
    height: 48px;
}

.volume {
    display: flex;
    gap: 6px;
    padding: 8px 0 0 12px;
}

.volume svg {
    margin-top: 2px;
}

.volume a {
    display: block;
}

.volume progress {
    display: block;
    width: 189px;
    height: 14px;
    margin: 2px 0 0;
    border: 1px solid #bcbcbc;
    appearance: none;
}

.volume progress::-webkit-progress-bar {
    background: #e6e6e6;
}

.volume progress::-webkit-progress-value {
    background: #26a0da;
}

.volume p {
    color: #6d6d6d;
}

.exp-status {
    display: flex;
    align-items: center;
    justify-content: space-between;
    height: 24px;
    padding: 0 26px 0 14px;
    color: #1e395b;
}

.exp-status span {
    padding-right: 10px;
    border-right: 1px solid #f0f0f0;
}

.details {
    width: 20px;
    height: 13px;
}
```
